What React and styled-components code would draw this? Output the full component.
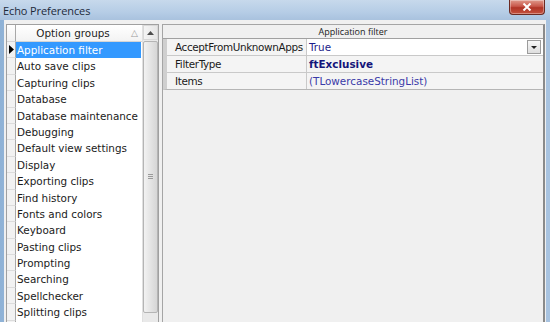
import React from 'react'
import styled, { createGlobalStyle } from 'styled-components'

const GlobalStyle = createGlobalStyle`
  html, body {
    margin: 0;
    padding: 0;
    overflow: hidden;
    background: #a9c4e0;
  }
`

const Window = styled.div`
  width: 550px;
  height: 322px;
  display: flex;
  flex-direction: column;
  background: linear-gradient(90deg, #8fb2d6 0%, #b9d0e8 40%, #a8c3e0 100%);
  overflow: hidden;
`

const TitleBar = styled.div`
  height: 20px;
  flex: none;
  display: flex;
  align-items: flex-start;
  justify-content: space-between;
  background: linear-gradient(180deg, #c7d9ec 0%, #b6cde6 60%, #a9c2de 100%);
`

const Title = styled.div`
  font-family: "Open Sans", "Noto Sans", sans-serif;
  font-size: 11px;
  color: #1d2a3a;
  padding: 3px 0 0 3px;
  letter-spacing: -0.1px;
`

const CloseButton = styled.div`
  width: 34px;
  height: 14px;
  margin-right: 5px;
  border: 1px solid #6b2a22;
  border-top: none;
  border-radius: 0 0 4px 4px;
  background: linear-gradient(180deg, #e09a8c 0%, #c8574a 45%, #b03426 55%, #c5523f 100%);
  display: flex;
  align-items: center;
  justify-content: center;
  box-shadow: inset 0 0 0 1px rgba(255, 255, 255, 0.35);
`

const Body = styled.div`
  flex: 1;
  display: flex;
  margin: 0 4px 0 4px;
  padding: 4px 1px 0 2px;
  background: #f0f0f0;
  gap: 3px;
  min-height: 0;
`

const LeftPanel = styled.div`
  width: 151px;
  flex: none;
  border: 1px solid #a0a0a0;
  border-bottom: none;
  background: #fff;
  display: flex;
  min-height: 0;
`

const GridArea = styled.div`
  flex: 1;
  display: flex;
  flex-direction: column;
  min-width: 0;
`

const Row = styled.div`
  display: flex;
  height: ${p => p.h}px;
  flex: none;
`

const IndicatorCell = styled.div`
  width: 9px;
  flex: none;
  background: #f2f2f2;
  border-right: 1px solid #a8a8a8;
  border-bottom: 1px solid #dcdcdc;
  box-sizing: border-box;
  display: flex;
  align-items: center;
  justify-content: center;
`

const HeaderIndicator = styled(IndicatorCell)`
  background: linear-gradient(180deg, #ffffff 0%, #f1f1f1 100%);
  border-bottom: 1px solid #d5d5d5;
`

const HeaderCell = styled.div`
  flex: 1;
  position: relative;
  background: linear-gradient(180deg, #ffffff 0%, #f3f3f3 100%);
  border-bottom: 1px solid #d5d5d5;
  box-sizing: border-box;
  font-family: "DejaVu Sans", Verdana, sans-serif;
  font-size: 10.4px;
  color: #1e1e1e;
  display: flex;
  align-items: center;
  justify-content: center;
  padding-right: 12px;
`

const SortArrow = styled.span`
  position: absolute;
  right: 4px;
  top: 3px;
  font-size: 9px;
  color: #9a9a9a;
`

const ItemCell = styled.div`
  flex: 1;
  box-sizing: border-box;
  font-family: "DejaVu Sans", Verdana, sans-serif;
  font-size: 10.4px;
  line-height: 16px;
  padding-left: 1px;
  margin-right: 1px;
  white-space: nowrap;
  overflow: hidden;
  color: ${p => (p.selected ? '#ffffff' : '#1a1a1a')};
  background: ${p => (p.selected ? '#3399ff' : '#ffffff')};
`

const Scrollbar = styled.div`
  width: 15px;
  flex: none;
  display: flex;
  flex-direction: column;
  background: #e9e9e9;
  border-left: 1px solid #e0e0e0;
`

const ScrollButton = styled.div`
  height: 15px;
  flex: none;
  display: flex;
  align-items: center;
  justify-content: center;
  background: linear-gradient(90deg, #f4f4f4, #e6e6e6);
  border: 1px solid #d8d8d8;
  box-sizing: border-box;
`

const Thumb = styled.div`
  height: 272px;
  flex: none;
  margin: 1px 0 0 0;
  border: 1px solid #b4b4b4;
  border-radius: 2px;
  background: linear-gradient(90deg, #f2f2f2 0%, #e4e4e4 50%, #d6d6d6 100%);
  box-sizing: border-box;
  display: flex;
  align-items: center;
  justify-content: center;
`

const Grip = styled.div`
  width: 5px;
  height: 6px;
  background: repeating-linear-gradient(180deg, #9a9a9a 0 1px, transparent 1px 2px);
`

const RightPanel = styled.div`
  flex: 1;
  display: flex;
  flex-direction: column;
  border: 1px solid #a5a5a5;
  border-bottom: none;
  border-right: 2px solid #8a8a8a;
  background: #f0f0f0;
  min-width: 0;
`

const SectionHeader = styled.div`
  height: 13px;
  flex: none;
  font-family: "Open Sans", "Noto Sans", sans-serif;
  font-size: 9px;
  color: #222;
  display: flex;
  align-items: center;
  justify-content: center;
  background: #f0f0f0;
  border-bottom: 1px solid #a0a0a0;
`

const PropGrid = styled.div`
  display: flex;
  flex-direction: column;
  border-left: 4px solid #cfcfcf;
  border-bottom: 1px solid #b5b5b5;
`

const PropRow = styled.div`
  display: flex;
  height: 16px;
  border-bottom: ${p => (p.last ? 'none' : '1px solid #c9c9c9')};
`

const PropName = styled.div`
  width: 140px;
  flex: none;
  box-sizing: border-box;
  font-family: "DejaVu Sans", Verdana, sans-serif;
  font-size: 10.4px;
  letter-spacing: -0.35px;
  line-height: 16px;
  padding-left: 8px;
  white-space: nowrap;
  overflow: hidden;
  color: #1a1a1a;
  background: #f4f4f4;
  border-right: 1px solid #c9c9c9;
`

const PropValue = styled.div`
  flex: 1;
  display: flex;
  align-items: center;
  justify-content: space-between;
  font-family: "DejaVu Sans", Verdana, sans-serif;
  font-size: 10.4px;
  line-height: 16px;
  padding-left: 2px;
  font-weight: ${p => (p.bold ? 'bold' : 'normal')};
  color: ${p => p.color};
  background: ${p => (p.editing ? '#ffffff' : '#f4f4f4')};
`

const DropButton = styled.div`
  width: 12px;
  height: 12px;
  margin-right: 2px;
  border: 1px solid #9c9c9c;
  background: linear-gradient(180deg, #f8f8f8, #dedede);
  display: flex;
  align-items: center;
  justify-content: center;
`

const items = [
  'Application filter',
  'Auto save clips',
  'Capturing clips',
  'Database',
  'Database maintenance',
  'Debugging',
  'Default view settings',
  'Display',
  'Exporting clips',
  'Find history',
  'Fonts and colors',
  'Keyboard',
  'Pasting clips',
  'Prompting',
  'Searching',
  'Spellchecker',
  'Splitting clips',
  '',
]

const props = [
  { name: 'AcceptFromUnknownApps', value: 'True', color: '#1c1c8a', editing: true },
  { name: 'FilterType', value: 'ftExclusive', color: '#14147a', bold: true },
  { name: 'Items', value: '(TLowercaseStringList)', color: '#3a3aa8' },
]

export default function App() {
  return (
    <Window>
      <GlobalStyle />
      <TitleBar>
        <Title>Echo Preferences</Title>
        <CloseButton>
          <svg width="10" height="8" viewBox="0 0 10 8">
            <path d="M1.5 0.5 L8.5 7.5 M8.5 0.5 L1.5 7.5" stroke="#fff" strokeWidth="2" />
          </svg>
        </CloseButton>
      </TitleBar>
      <Body>
        <LeftPanel>
          <GridArea>
            <Row h={17}>
              <HeaderIndicator />
              <HeaderCell>
                Option groups
                <SortArrow>△</SortArrow>
              </HeaderCell>
            </Row>
            {items.map((item, i) => (
              <Row h={16.4} key={i}>
                <IndicatorCell>
                  {i === 0 && (
                    <svg width="5" height="9" viewBox="0 0 5 9">
                      <path d="M0 0 L5 4.5 L0 9 Z" fill="#000" />
                    </svg>
                  )}
                </IndicatorCell>
                <ItemCell selected={i === 0}>{item}</ItemCell>
              </Row>
            ))}
          </GridArea>
          <Scrollbar>
            <ScrollButton>
              <svg width="7" height="4" viewBox="0 0 7 4">
                <path d="M0 4 L3.5 0 L7 4 Z" fill="#4d4d4d" />
              </svg>
            </ScrollButton>
            <Thumb>
              <Grip />
            </Thumb>
          </Scrollbar>
        </LeftPanel>
        <RightPanel>
          <SectionHeader>Application filter</SectionHeader>
          <PropGrid>
            {props.map((p, i) => (
              <PropRow key={p.name} last={i === props.length - 1}>
                <PropName>{p.name}</PropName>
                <PropValue color={p.color} bold={p.bold} editing={p.editing}>
                  {p.value}
                  {p.editing && (
                    <DropButton>
                      <svg width="6" height="3" viewBox="0 0 6 3">
                        <path d="M0 0 L6 0 L3 3 Z" fill="#222" />
                      </svg>
                    </DropButton>
                  )}
                </PropValue>
              </PropRow>
            ))}
          </PropGrid>
        </RightPanel>
      </Body>
    </Window>
  )
}
